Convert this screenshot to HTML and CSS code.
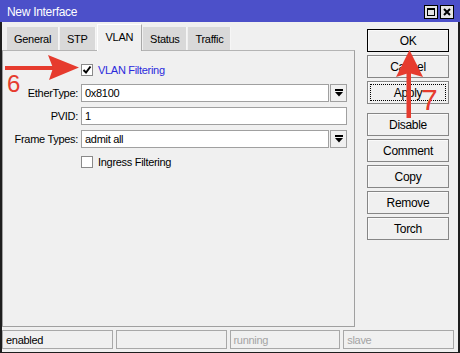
FILE: index.html
```html
<!DOCTYPE html>
<html lang="en">
<head>
    <meta charset="UTF-8">
    <title>New Interface</title>
    <link rel="stylesheet" href="styles.css">
</head>
<body>
    <div class="window">
        <div class="titlebar">
            <span class="title">New Interface</span>
            <div class="title-btns">
                <span class="title-btn"><span class="max-icon"></span></span>
                <span class="title-btn">
                    <svg width="8" height="8" viewBox="0 0 8 8"><path d="M1 1 L7 7 M7 1 L1 7" stroke="#000" stroke-width="2"/></svg>
                </span>
            </div>
        </div>

        <div class="frame">
            <div class="main">
                <div class="tabs-area">
                    <div class="tabs">
                        <div class="tab">General</div>
                        <div class="tab">STP</div>
                        <div class="tab active">VLAN</div>
                        <div class="tab">Status</div>
                        <div class="tab">Traffic</div>
                    </div>
                    <div class="panel">
                        <div class="row check-row">
                            <span class="checkbox"><svg width="10" height="10" viewBox="0 0 10 10"><path d="M1.5 5 L4 7.5 L8.5 1.5" fill="none" stroke="#000" stroke-width="2"/></svg></span>
                            <span class="check-label blue">VLAN Filtering</span>
                        </div>
                        <div class="row">
                            <span class="label">EtherType:</span>
                            <span class="input short">0x8100</span>
                            <span class="drop-btn">
                                <svg width="8" height="8" viewBox="0 0 8 8"><rect x="0" y="0" width="8" height="2" fill="#000"/><path d="M0 3 H8 L4 7.5 Z" fill="#000"/></svg>
                            </span>
                        </div>
                        <div class="row">
                            <span class="label">PVID:</span>
                            <span class="input long">1</span>
                        </div>
                        <div class="row">
                            <span class="label">Frame Types:</span>
                            <span class="input short">admit all</span>
                            <span class="drop-btn">
                                <svg width="8" height="8" viewBox="0 0 8 8"><rect x="0" y="0" width="8" height="2" fill="#000"/><path d="M0 3 H8 L4 7.5 Z" fill="#000"/></svg>
                            </span>
                        </div>
                        <div class="row check-row">
                            <span class="checkbox"></span>
                            <span class="check-label">Ingress Filtering</span>
                        </div>
                    </div>
                </div>

                <div class="buttons">
                    <div class="btn default">OK</div>
                    <div class="btn">Cancel</div>
                    <div class="btn focused">Apply</div>
                    <div class="btn spaced">Disable</div>
                    <div class="btn">Comment</div>
                    <div class="btn">Copy</div>
                    <div class="btn">Remove</div>
                    <div class="btn">Torch</div>
                </div>
            </div>

            <div class="statusbar">
                <div class="cell">enabled</div>
                <div class="cell"></div>
                <div class="cell muted">running</div>
                <div class="cell muted">slave</div>
            </div>
        </div>

        <!-- red annotations drawn over the dialog -->
        <svg class="marks" width="460" height="353" viewBox="0 0 460 353">
            <rect x="5" y="66" width="48" height="4" fill="#e63b2e"/>
            <path d="M48 55 L79 67.5 L49 80 L53 68 Z" fill="#e63b2e"/>
            <rect x="406.5" y="70" width="4.5" height="48" fill="#e63b2e"/>
            <path d="M409.5 50 L423 77 L409 73 L396 77 Z" fill="#e63b2e"/>
        </svg>
        <span class="mark-num six">6</span>
        <span class="mark-num seven">7</span>
    </div>
</body>
</html>
```

FILE: styles.css
```css
* {
    margin: 0;
    padding: 0;
    box-sizing: border-box;
}

body {
    width: 460px;
    height: 353px;
    overflow: hidden;
    background: #f0f0f0;
    font-family: 'Liberation Sans', Arial, sans-serif;
    font-size: 11px;
    letter-spacing: -0.3px;
    color: #000;
}

.window {
    position: relative;
    width: 460px;
    height: 353px;
    display: flex;
    flex-direction: column;
}

.titlebar {
    height: 22px;
    background: #4c50c9;
    color: #fff;
    display: flex;
    align-items: center;
    justify-content: space-between;
    padding: 1px 6px 0 7px;
    font-size: 12px;
}

.title-btns {
    display: flex;
    gap: 2px;
}

.title-btn {
    width: 14px;
    height: 14px;
    background: #e4e4e4;
    border: 1px solid #000;
    display: flex;
    align-items: center;
    justify-content: center;
}

.max-icon {
    width: 8px;
    height: 8px;
    border: 1px solid #000;
    border-top-width: 2px;
}

.frame {
    flex: 1;
    display: flex;
    flex-direction: column;
    border: solid #1e1e1e;
    border-width: 0 2px 1px;
}

.main {
    height: 305px;
    display: flex;
    padding-top: 2px;
}

.tabs-area {
    width: 353px;
    display: flex;
    flex-direction: column;
}

.tabs {
    height: 26px;
    display: flex;
    align-items: flex-end;
    gap: 1px;
    padding-left: 5px;
    position: relative;
    z-index: 1;
}

.tab {
    height: 23px;
    padding: 0 7px;
    display: flex;
    align-items: center;
    background: #d9d9d9;
    border-right: 1px solid #f6f6f6;
}

.tab.active {
    height: 27px;
    margin-bottom: -1px;
    padding: 0 8px 2px;
    background: #f0f0f0;
    border: 1px solid #fff;
    border-right-color: #a8a8a8;
    border-bottom: none;
}

.panel {
    flex: 1;
    border: 1px solid #a0a0a0;
    border-top-color: #b4b4b4;
    padding-top: 10px;
}

.row {
    height: 18px;
    display: flex;
    align-items: center;
    margin-bottom: 5px;
}

.label {
    width: 75px;
    margin-right: 3px;
    text-align: right;
}

.check-row {
    padding-left: 78px;
}

.checkbox {
    width: 12px;
    height: 12px;
    background: #fff;
    border: 1px solid #8a8a8a;
    display: flex;
    align-items: center;
    justify-content: center;
}

.check-label {
    margin-left: 5px;
}

.blue {
    color: #2a2adc;
}

.input {
    height: 18px;
    background: #fff;
    border: 1px solid #a0a0a0;
    padding-left: 3px;
    display: flex;
    align-items: center;
}

.input.short {
    width: 248px;
}

.input.long {
    width: 266px;
}

.drop-btn {
    width: 17px;
    height: 18px;
    margin-left: 1px;
    border: 1px solid #a0a0a0;
    background: #f0f0f0;
    display: flex;
    align-items: center;
    justify-content: center;
}

.buttons {
    width: 82px;
    margin-left: 12px;
    padding-top: 5px;
    display: flex;
    flex-direction: column;
    gap: 3px;
}

.btn {
    height: 23px;
    border: 1px solid #868686;
    background: #f0f0f0;
    box-shadow: inset 1px 1px #fafafa;
    display: flex;
    align-items: center;
    justify-content: center;
    font-size: 12px;
}

.btn.default {
    border-color: #000;
}

.btn.focused {
    outline: 1px dotted #000;
    outline-offset: -4px;
}

.btn.spaced {
    margin-top: 6px;
}

.statusbar {
    margin-top: 3px;
    height: 19px;
    display: grid;
    grid-template-columns: repeat(4, 1fr);
    gap: 3px;
    padding-right: 4px;
}

.cell {
    border: 1px solid #a8a8a8;
    padding-left: 3px;
    display: flex;
    align-items: center;
}

.cell.muted {
    color: #a4a4a4;
}

.marks {
    position: absolute;
    top: 0;
    left: 0;
    pointer-events: none;
}

.mark-num {
    position: absolute;
    color: #e63b2e;
    line-height: 1;
    letter-spacing: 0;
}

.six {
    left: 7px;
    top: 72px;
    font-size: 24px;
}

.seven {
    left: 421px;
    top: 85px;
    font-size: 30px;
}
```
